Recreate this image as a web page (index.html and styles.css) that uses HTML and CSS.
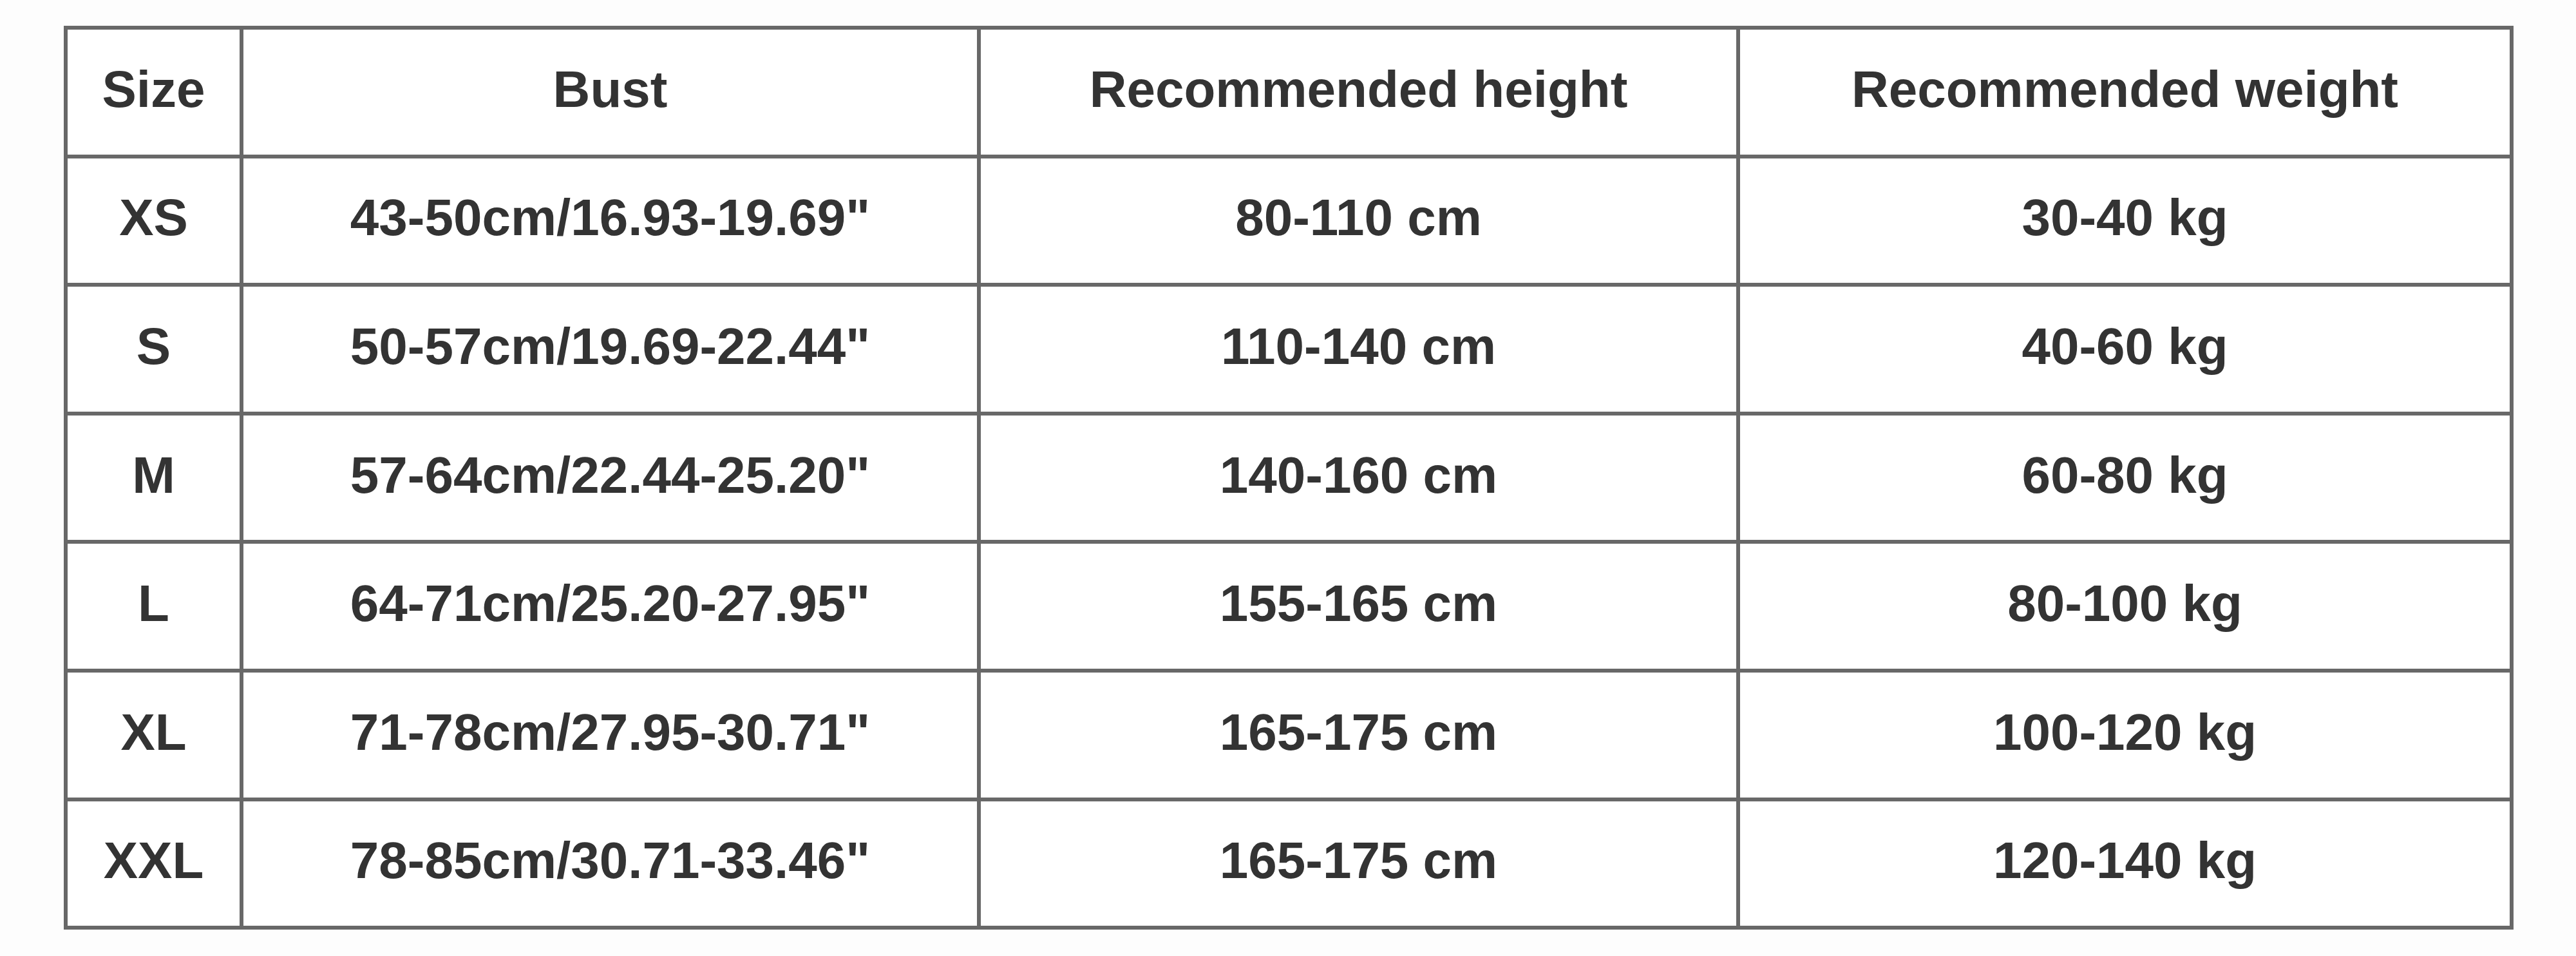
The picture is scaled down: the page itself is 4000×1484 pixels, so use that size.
FILE: index.html
```html
<!DOCTYPE html>
<html lang="en">
<head>
<meta charset="utf-8">
<title>Size chart</title>
<link rel="stylesheet" href="styles.css">
</head>
<body>
<table class="size-chart">
  <colgroup>
    <col class="c-size">
    <col class="c-bust">
    <col class="c-height">
    <col class="c-weight">
  </colgroup>
  <thead>
    <tr><th>Size</th><th>Bust</th><th>Recommended height</th><th>Recommended weight</th></tr>
  </thead>
  <tbody>
    <tr><td>XS</td><td>43-50cm/16.93-19.69"</td><td>80-110 cm</td><td>30-40 kg</td></tr>
    <tr><td>S</td><td>50-57cm/19.69-22.44"</td><td>110-140 cm</td><td>40-60 kg</td></tr>
    <tr><td>M</td><td>57-64cm/22.44-25.20"</td><td>140-160 cm</td><td>60-80 kg</td></tr>
    <tr><td>L</td><td>64-71cm/25.20-27.95"</td><td>155-165 cm</td><td>80-100 kg</td></tr>
    <tr><td>XL</td><td>71-78cm/27.95-30.71"</td><td>165-175 cm</td><td>100-120 kg</td></tr>
    <tr><td>XXL</td><td>78-85cm/30.71-33.46"</td><td>165-175 cm</td><td>120-140 kg</td></tr>
  </tbody>
</table>
</body>
</html>
```

FILE: styles.css
```css
html, body {
  margin: 0;
  padding: 0;
  background: #fdfdfd;
}

body {
  padding: 40px 0 0 99px;
}

.size-chart {
  border-collapse: collapse;
  table-layout: fixed;
  width: 3798px;
  background: #ffffff;
  font-family: "Liberation Sans", Arial, sans-serif;
  font-weight: bold;
  font-size: 80px;
  color: #333333;
}

.c-size { width: 273px; }
.c-bust { width: 1145px; }
.c-height { width: 1179px; }
.c-weight { width: 1201px; }

.size-chart th,
.size-chart td {
  border: 6px solid #686868;
  height: 199.6px;
  padding: 0 0 8px 0;
  box-sizing: border-box;
  text-align: center;
  vertical-align: middle;
  font-weight: bold;
  line-height: 1;
  white-space: nowrap;
}
```
